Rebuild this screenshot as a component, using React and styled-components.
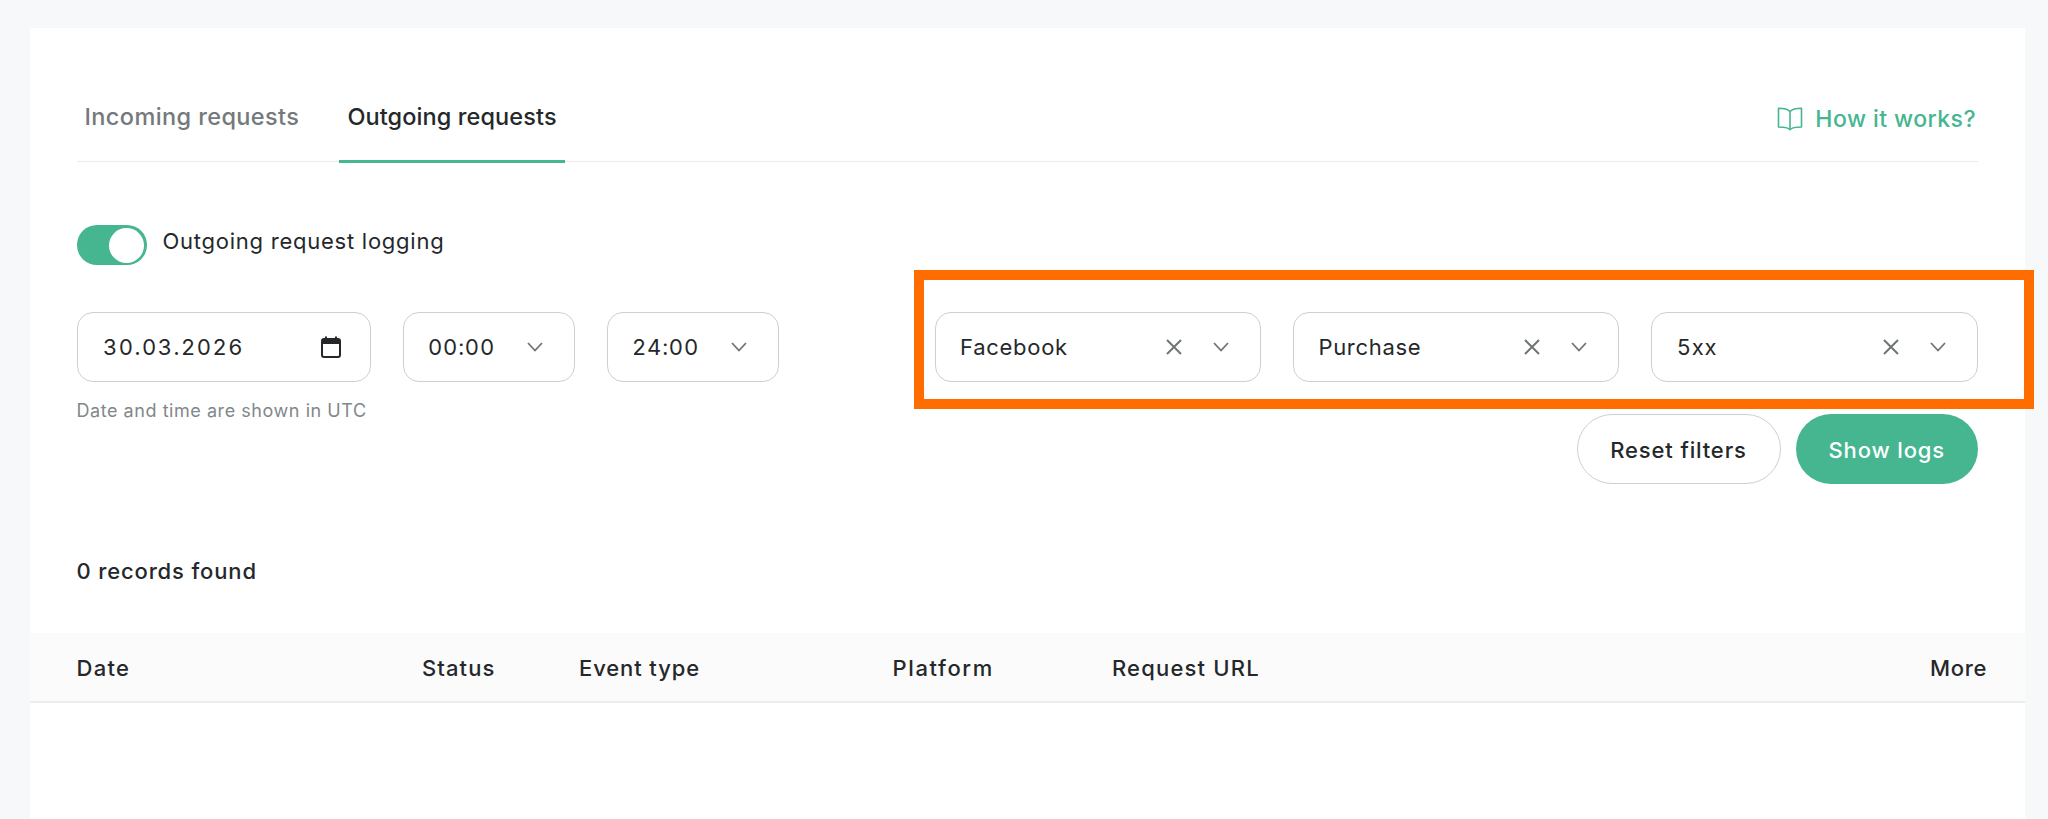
import React from "react";
import styled, { createGlobalStyle } from "styled-components";

const GREEN = "#45b68f";
const FONT = `Inter, "Noto Sans", sans-serif`;

const GlobalStyle = createGlobalStyle`
  html, body {
    margin: 0;
    height: 100%;
    background: #f7f8fa;
    overflow: hidden;
  }
  body {
    font-family: ${FONT};
    color: #25282b;
  }
`;

const BookIcon = () => (
  <svg width="26" height="24" viewBox="0 0 26 24" fill="none" stroke={GREEN} strokeWidth="1.600" strokeLinejoin="round">
    <path d="M13 4.500C11 2.300 8 1.300 1.500 1.300V20c6.500 0 9.500.500 11.500 2.700 2-2.200 5-2.700 11.500-2.700V1.300C18 1.300 15 2.300 13 4.500Z" />
    <path d="M13 4.500v18" />
  </svg>
);

const CalendarIcon = () => (
  <svg width="20" height="22" viewBox="0 0 20 22" fill="none">
    <path d="M5 0.500v4M15 0.500v4" stroke="#25282b" strokeWidth="2" />
    <rect x="1" y="3" width="18" height="18" rx="2" stroke="#25282b" strokeWidth="2" />
    <path d="M1 3h18v5H1Z" fill="#25282b" />
  </svg>
);

const Chevron = () => (
  <svg width="16" height="10" viewBox="0 0 16 10" fill="none" stroke="#6f7476" strokeWidth="1.800">
    <path d="M1 1l7 7.500L15 1" />
  </svg>
);

const Cross = () => (
  <svg width="16" height="16" viewBox="0 0 16 16" fill="none" stroke="#6f7476" strokeWidth="2">
    <path d="M1 1l14 14M15 1L1 15" />
  </svg>
);

const App = () => {
  const selects = ["Facebook", "Purchase", "5xx"];
  const columns = [
    ["Date", 345.9, 1.3],
    ["Status", 157.2, 1.1],
    ["Event type", 314, 0.9],
    ["Platform", 219.6, 1.6],
    ["Request URL", 819.1, 1.2],
  ];

  return (
    <>
      <GlobalStyle />
      <Card>
        <Inner>
          <TabBar>
            <Tab>Incoming requests</Tab>
            <Tab $active>Outgoing requests</Tab>
            <HowLink>
              <BookIcon />
              How it works?
            </HowLink>
          </TabBar>

          <LoggingRow>
            <Switch>
              <Knob />
            </Switch>
            <LoggingLabel>Outgoing request logging</LoggingLabel>
          </LoggingRow>

          <Filters>
            <div>
              <DateRow>
                <DateField>
                  <FieldText $spacing={1.5}>30.03.2026</FieldText>
                  <CalendarIcon />
                </DateField>
                <TimeField>
                  <FieldText $spacing={0.8}>00:00</FieldText>
                  <Chevron />
                </TimeField>
                <TimeField>
                  <FieldText $spacing={0.8}>24:00</FieldText>
                  <Chevron />
                </TimeField>
              </DateRow>
              <Hint>Date and time are shown in UTC</Hint>
            </div>

            <RightCol>
              <SelectRow>
                <Highlight />
                {selects.map((item) => (
                  <SelectField key={item}>
                    <FieldText $spacing={0.7}>{item}</FieldText>
                    <SelectIcons>
                      <Cross />
                      <Chevron />
                    </SelectIcons>
                  </SelectField>
                ))}
              </SelectRow>
              <Buttons>
                <OutlineButton>Reset filters</OutlineButton>
                <FilledButton>Show logs</FilledButton>
              </Buttons>
            </RightCol>
          </Filters>

          <Records>0 records found</Records>
        </Inner>

        <TableHead>
          {columns.map(([name, width, spacing]) => (
            <HeadCell key={name} $width={width} $spacing={spacing}>
              {name}
            </HeadCell>
          ))}
          <HeadCell $spacing={0.65}>More</HeadCell>
        </TableHead>
      </Card>
    </>
  );
};

const Card = styled.div`
  margin: 28px 23.500px 0 29.500px;
  height: 791px;
  background: #fff;
`;

const Inner = styled.div`
  padding: 0 47px;
`;

const TabBar = styled.div`
  height: 134px;
  padding-top: 64px;
  box-sizing: border-box;
  display: flex;
  align-items: stretch;
  border-bottom: 1.500px solid #ececec;
  gap: 32px;
`;

const Tab = styled.div`
  margin-bottom: -1.500px;
  box-sizing: border-box;
  padding: 8px 8px 0;
  font-size: 23.500px;
  line-height: 34px;
  font-weight: 500;
  letter-spacing: ${(props) => (props.$active ? "0.1px" : "0.4px")};
  color: ${(props) => (props.$active ? "#25282b" : "#74797b")};
  border-bottom: 3px solid ${(props) => (props.$active ? GREEN : "transparent")};
`;

const HowLink = styled.div`
  margin-left: auto;
  padding-right: 1.500px;
  display: flex;
  align-items: center;
  gap: 12px;
  height: 53px;
  font-size: 23px;
  letter-spacing: 0.45px;
  font-weight: 500;
  color: ${GREEN};
`;

const LoggingRow = styled.div`
  margin-top: 63px;
  display: flex;
  align-items: center;
  gap: 16px;
`;

const Switch = styled.div`
  width: 70px;
  height: 40px;
  box-sizing: border-box;
  border-radius: 20px;
  background: ${GREEN};
  padding: 2.500px;
  display: flex;
  justify-content: flex-end;
`;

const Knob = styled.div`
  width: 35px;
  height: 35px;
  border-radius: 50%;
  background: #fff;
`;

const LoggingLabel = styled.span`
  font-size: 22px;
  line-height: 30px;
  letter-spacing: 0.75px;
  margin-top: -8px;
`;

const Filters = styled.div`
  margin-top: 47px;
  display: flex;
  justify-content: space-between;
`;

const DateRow = styled.div`
  display: flex;
  gap: 31.500px;
`;

const Field = styled.div`
  height: 70px;
  box-sizing: border-box;
  border: 1.500px solid #c8d2d2;
  border-radius: 16px;
  display: flex;
  align-items: center;
  justify-content: space-between;
`;

const DateField = styled(Field)`
  width: 294.500px;
  padding: 0 29px 0 25.500px;
`;

const TimeField = styled(Field)`
  width: 172.500px;
  padding: 0 31px 0 24.500px;
`;

const SelectField = styled(Field)`
  width: 326.300px;
  padding: 0 31px 0 24.500px;
`;

const FieldText = styled.span`
  font-size: 22px;
  font-variant-numeric: tabular-nums;
  letter-spacing: ${(props) => props.$spacing}px;
`;

const SelectIcons = styled.span`
  display: flex;
  align-items: center;
  gap: 31px;
`;

const Hint = styled.div`
  margin-top: 16px;
  font-size: 18px;
  line-height: 26px;
  letter-spacing: 0.55px;
  color: #82878a;
`;

const RightCol = styled.div`
  display: flex;
  flex-direction: column;
  align-items: flex-end;
  gap: 31.500px;
`;

const SelectRow = styled.div`
  position: relative;
  display: flex;
  gap: 32px;
`;

const Highlight = styled.div`
  position: absolute;
  inset: -42.500px -56.500px -26.500px -20.500px;
  border: 10px solid #ff6d00;
  pointer-events: none;
`;

const Buttons = styled.div`
  display: flex;
  gap: 15.500px;
`;

const OutlineButton = styled.button`
  width: 204px;
  height: 70.500px;
  padding: 2px 0 0;
  border-radius: 36px;
  border: 1.500px solid #c8d2d2;
  background: #fff;
  font-family: ${FONT};
  font-size: 22px;
  font-weight: 500;
  letter-spacing: 0.85px;
  color: #25282b;
`;

const FilledButton = styled(OutlineButton)`
  width: 181.500px;
  border: 0;
  background: ${GREEN};
  color: #fff;
`;

const Records = styled.div`
  margin-top: 72px;
  font-size: 22px;
  line-height: 30px;
  font-weight: 500;
  letter-spacing: 0.85px;
`;

const TableHead = styled.div`
  margin-top: 47px;
  height: 70px;
  box-sizing: border-box;
  padding: 2px 37.500px 0 47px;
  display: flex;
  align-items: center;
  background: #fbfbfb;
  border-bottom: 2px solid #ededee;
`;

const HeadCell = styled.div`
  width: ${(props) => (props.$width ? `${props.$width}px` : "auto")};
  font-size: 22px;
  font-weight: 500;
  letter-spacing: ${(props) => props.$spacing}px;
  margin-left: ${(props) => (props.$width ? "0" : "auto")};
`;

export default App;
